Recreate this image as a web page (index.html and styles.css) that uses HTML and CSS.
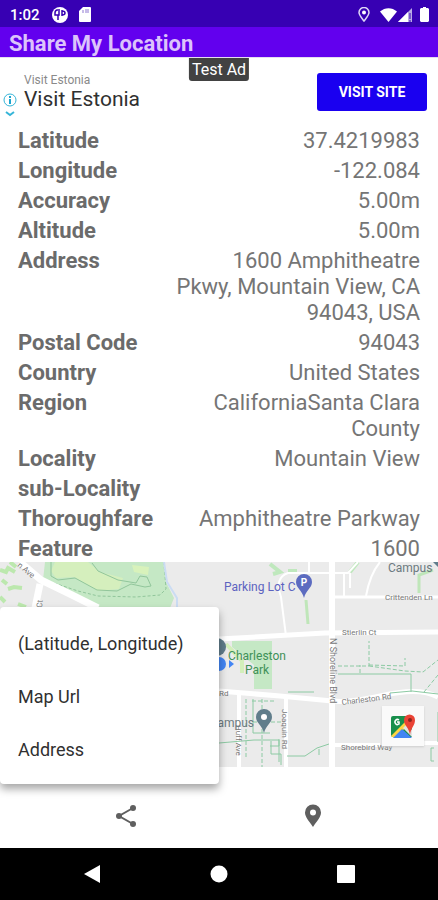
FILE: index.html
```
<!DOCTYPE html>
<html lang="en">
<head>
    <meta charset="UTF-8">
    <meta name="viewport" content="width=device-width, initial-scale=1.0">
    <title>Share My Location</title>
    <link rel="stylesheet" href="styles.css">
</head>
<body>
    <div class="status-bar">
        <span class="clock">1:02</span>
        <svg width="16" height="16" viewBox="0 0 16 16">
            <circle cx="8" cy="8" r="8" fill="#fff"/>
            <path d="M8 3H5a3 3 0 0 0-2 3v2h4V4M6 8v5M10 3v6M10 4c4 0 4 4 0 4" fill="none" stroke="#3700b3" stroke-width="1.500"/>
        </svg>
        <svg class="sd" width="12" height="15" viewBox="0 0 12 15">
            <path d="M4 0h7a1 1 0 0 1 1 1v13a1 1 0 0 1-1 1H1a1 1 0 0 1-1-1V4z" fill="#fff"/>
            <path d="M4 3v3M7 2v4M9 2v4" stroke="#8f78d2"/>
        </svg>
        <svg class="right" width="12" height="15" viewBox="0 0 12 15">
            <path d="M6 14C3 10 1 8 1 5.500a5 5 0 0 1 10 0C11 8 9 10 6 14z" fill="none" stroke="#ded6f5" stroke-width="1.500"/>
            <circle cx="6" cy="5.500" r="2" fill="#fff"/>
        </svg>
        <svg class="wifi" width="17" height="14" viewBox="0 0 17 14">
            <path d="M0 3.500C5-1 12-1 17 3.500L8.500 14z" fill="#fff"/>
        </svg>
        <svg class="signal" width="15" height="14" viewBox="0 0 15 14">
            <path d="M0 14L14 0v14z" fill="#b9aae5"/>
            <path d="M0 14L10 4v10z" fill="#fff"/>
            <path d="M12 5v6M12 12v2" stroke="#3700b3"/>
        </svg>
        <svg class="battery" width="9" height="15" viewBox="0 0 9 15">
            <path d="M3 0h3v1h2l1 1v12l-1 1H1l-1-1V2l1-1h2z" fill="#fff"/>
        </svg>
    </div>

    <header class="title-bar">
        <h1>Share My Location</h1>
    </header>

    <div class="ad">
        <span class="test-ad">Test Ad</span>
        <svg class="ad-info" width="14" height="24" viewBox="0 0 14 24">
            <circle cx="7" cy="7" r="6" fill="#fff" stroke="#35b5d8"/>
            <path d="M7 6v5M7 3v2" stroke="#1aa5cf" stroke-width="2"/>
            <path d="M3 19l4 3 4-3" fill="none" stroke="#35b5d8" stroke-width="2"/>
        </svg>
        <div class="ad-text">
            <span class="advertiser">Visit Estonia</span>
            <span class="headline">Visit Estonia</span>
        </div>
        <button type="button" class="visit">VISIT SITE</button>
    </div>

    <table class="details">
        <tr><th scope="row">Latitude</th><td>37.4219983</td></tr>
        <tr><th scope="row">Longitude</th><td>-122.084</td></tr>
        <tr><th scope="row">Accuracy</th><td>5.00m</td></tr>
        <tr><th scope="row">Altitude</th><td>5.00m</td></tr>
        <tr><th scope="row">Address</th><td>1600 Amphitheatre Pkwy, Mountain View, CA 94043, USA</td></tr>
        <tr><th scope="row">Postal Code</th><td>94043</td></tr>
        <tr><th scope="row">Country</th><td>United States</td></tr>
        <tr><th scope="row">Region</th><td>CaliforniaSanta Clara County</td></tr>
        <tr><th scope="row">Locality</th><td>Mountain View</td></tr>
        <tr><th scope="row">sub-Locality</th><td></td></tr>
        <tr><th scope="row">Thoroughfare</th><td>Amphitheatre Parkway</td></tr>
        <tr><th scope="row">Feature</th><td>1600</td></tr>
    </table>

    <div class="map">
        <svg class="map-canvas" viewBox="0 0 438 205" preserveAspectRatio="xMidYMin slice">
            <rect width="438" height="205" fill="#ebebeb"/>

            <!-- golf course -->
            <path d="M45 0H164L166 20 174 36 170 46H98L72 30 43 18z" fill="#c5e8c5"/>
            <path d="M55 0L51 9 56 16 74 15 98 29 119 27 123 16 100 10 88 0z" fill="#d5efbd"/>
            <path d="M132 3l17 2-1 8-14-3z" fill="#d8f2bb"/>
            <path d="M51 0v14l7 4 17-2 22 12 20 1 14-7 14 3 6-1-4-9-7-1-4 7-18-3-20-9-6-8" fill="none" stroke="#91c69b"/>
            <path d="M45 18l33 11 20 5 38 1 24-2 6-6-2-26" fill="none" stroke="#91c69b" stroke-dasharray="3 2"/>
            <path d="M164 0l3 20 10 16v10" fill="none" stroke="#cbdcf3" stroke-width="2"/>
            <path d="M0 8l6 2 2-4 7 4M2 18l5 4M8 27l6-2 8 1M0 35l5 5M10 0l6 5M18 42l8 3" fill="none" stroke="#bce8ae" stroke-width="4"/>

            <!-- parks -->
            <path d="M232 79h40v48h-18V103l-22-18z" fill="#c5e8c5"/>
            <path d="M226 82l16 17v12" fill="none" stroke="#d3efba" stroke-width="4"/>
            <path d="M270 2l10 8-7 2M288 9h9M358 0l-8 10" fill="none" stroke="#bfe8bd" stroke-width="4"/>
            <path d="M306 38l2 24M419 31V13l14-5" fill="none" stroke="#bfe6b9" stroke-width="3"/>

            <!-- roads -->
            <g fill="none" stroke="#fff">
                <path d="M20 0L41 18 72 33 98 46M40 22l-5 24" stroke-width="7"/>
                <path d="M219 77L325 71 438 70" stroke-width="5"/>
                <path d="M219 129L280 134 332 139Q350 141 385 133T438 135" stroke-width="5"/>
                <path d="M332 0V205" stroke-width="6"/>
                <path d="M332 35H438" stroke-width="3"/>
                <path d="M332 183H380M423 181H438M239 132V205M286 136V205" stroke-width="4"/>
                <path d="M286 74L281 35Q274 16 288 11H348L358 0M309 0V11M344 10V34M350 11V26M366 34Q370 12 380 0" stroke-width="2"/>
            </g>

            <!-- walking paths -->
            <g fill="none" stroke="#8ccaa3">
                <path d="M338 104h31V79M369 103l36 1V96M369 104l36 5 18 1 15-12M360 111v-8M424 130l14-17" stroke-dasharray="4 2"/>
                <path d="M338 112h73v18M390 131l22-2 26 3M219 181l35-3h25v22M287 194h18l12-8 12-4M319 187v6M288 130h26"/>
                <path d="M246 137v60M262 137v68M252 139h22M253 160h28" stroke-dasharray="4 2"/>
                <path d="M253 137v34h17M271 179v13h10v11M270 184h9v-7M434 186h-3v13h3M438 150v30"/>
            </g>

            <!-- street names -->
            <g class="street">
                <text x="385" y="38">Crittenden Ln</text>
                <text x="342" y="73">Stierlin Ct</text>
                <text x="342" y="143" transform="rotate(-7 342 143)">Charleston Rd</text>
                <text x="341" y="188">Shorebird Way</text>
                <text x="219" y="134">Rd</text>
                <text x="17" y="4" transform="rotate(40 17 4)">n Ave</text>
                <text x="42" y="46" transform="rotate(-85 42 46)">Ct</text>
                <text x="236" y="163" transform="rotate(90 236 163)">Huff Ave</text>
                <text x="282" y="147" transform="rotate(90 282 147)">Joaquin Rd</text>
                <text class="major" x="330" y="76" transform="rotate(90 330 76)">N Shoreline Blvd</text>
            </g>

            <!-- places -->
            <text class="place parking" x="224" y="29">Parking Lot C</text>
            <text class="place park" x="257" y="98" text-anchor="middle">Charleston</text>
            <text class="place park" x="257" y="112" text-anchor="middle">Park</text>
            <text class="place" x="388" y="10">Campus</text>
            <text class="place" x="254" y="165" text-anchor="end">Campus</text>
            <path d="M304 36C302 28 296 26 296 20a8 8 0 0 1 16 0C312 26 306 28 304 36z" fill="#5c6bc0"/>
            <text class="pin-letter" x="304" y="24" text-anchor="middle">P</text>
            <path d="M264 171C262 163 256 161 256 155a8 8 0 0 1 16 0C272 161 266 163 264 171z" fill="#607d8b"/>
            <circle cx="264" cy="155" r="3" fill="#fff"/>
            <circle cx="217" cy="85" r="9" fill="#607d8b"/>
            <circle cx="219" cy="102" r="7" fill="#4285f4"/>
            <path d="M229 98l5 4-5 4z" fill="#4285f4"/>
            <path d="M433 0h5v5z" fill="#607d8b"/>
        </svg>
        <button type="button" class="maps-button" aria-label="Open in Google Maps">
            <svg width="26" height="26" viewBox="0 0 26 26">
                <path d="M3 3h19v21H3a2 2 0 0 1-2-2V5a2 2 0 0 1 2-2z" fill="#188f4c"/>
                <path d="M1 23L17 7l3 4L4 25z" fill="#ffd443"/>
                <path d="M3 25l9-9 10 9z" fill="#4285f4"/>
                <path d="M13 15l4-4 5 6v7z" fill="#e3e3e3"/>
                <path d="M20 22C19 14 14 13 14 7a5 5 0 0 1 11 0C25 13 21 14 20 22z" fill="#ea4335"/>
                <circle cx="20" cy="7" r="2" fill="#8c251d"/>
                <path d="M9 7a2.500 2.500 0 1 0 0 4V9H7" fill="none" stroke="#fff" stroke-width="1.500"/>
            </svg>
        </button>
    </div>

    <div class="bottom">
        <div class="share-menu">
            <button type="button">(Latitude, Longitude)</button>
            <button type="button">Map Url</button>
            <button type="button">Address</button>
        </div>
        <nav class="tabs">
            <button type="button" aria-label="Share">
                <svg width="22" height="24" viewBox="0 0 22 24">
                    <path d="M18 4L4 12l14 8" fill="none" stroke="#5f5f5f" stroke-width="2"/>
                    <circle cx="18" cy="4" r="3" fill="#5f5f5f"/>
                    <circle cx="4" cy="12" r="3" fill="#5f5f5f"/>
                    <circle cx="18" cy="20" r="3" fill="#5f5f5f"/>
                </svg>
            </button>
            <button type="button" aria-label="Location">
                <svg width="16" height="24" viewBox="0 0 16 24">
                    <path fill-rule="evenodd" d="M8 23C4 17 0 13 0 8.500a8 8 0 0 1 16 0C16 13 12 17 8 23zM8 5.500a3 3 0 1 0 0 6 3 3 0 0 0 0-6z" fill="#5f5f5f"/>
                </svg>
            </button>
        </nav>
    </div>

    <div class="system-nav">
        <button type="button" aria-label="Back">
            <svg width="18" height="20" viewBox="0 0 18 20"><path d="M17 1v18L1 10z" fill="#fff"/></svg>
        </button>
        <button type="button" aria-label="Home">
            <svg width="18" height="18" viewBox="0 0 18 18"><circle cx="9" cy="9" r="8.500" fill="#fff"/></svg>
        </button>
        <button type="button" aria-label="Recent apps">
            <svg width="18" height="18" viewBox="0 0 18 18"><rect width="18" height="18" rx="1" fill="#fff"/></svg>
        </button>
    </div>
</body>
</html>
```
FILE: styles.css
```
* {
    box-sizing: border-box;
}

body {
    margin: 0;
    min-height: 100vh;
    display: flex;
    flex-direction: column;
    background-color: #ffffff;
    color: #757575;
    font-family: Roboto, Arial, sans-serif;
}

svg {
    display: block;
    flex-shrink: 0;
}

button {
    border: none;
    background: none;
    padding: 0;
    font-family: inherit;
    cursor: pointer;
}

.status-bar {
    display: flex;
    align-items: center;
    height: 27px;
    padding: 2px 9px 0 10px;
    background-color: #3700b3;
    color: #ffffff;
}

.clock {
    margin-right: 12px;
    font-size: 15px;
    font-weight: 500;
}

.sd {
    margin-left: 11px;
}

.right {
    margin-left: auto;
}

.wifi {
    margin-left: 10px;
}

.signal {
    margin-left: 1px;
}

.battery {
    margin-left: 7px;
}

.title-bar {
    padding: 4px 9px 0;
    background-color: #6200ee;
}

.title-bar h1 {
    margin: 0;
    font-size: 22px;
    line-height: 26px;
    font-weight: 700;
    color: #dcc3fb;
}

.ad {
    position: relative;
    display: flex;
    align-items: center;
    height: 69px;
    padding: 0 11px 0 3px;
    border-top: 1px solid #e4dcf0;
}

.test-ad {
    position: absolute;
    top: 0;
    left: 50%;
    transform: translateX(-50%);
    padding: 1px 3px;
    border-radius: 0 0 3px 3px;
    background-color: #424242;
    color: #ffffff;
    font-size: 16px;
    line-height: 21px;
}

.ad-info {
    margin-top: 26px;
}

.ad-text {
    display: flex;
    flex-direction: column;
    margin-left: 7px;
}

.advertiser {
    font-size: 12px;
    line-height: 14px;
    color: #8a8a8a;
}

.headline {
    font-size: 21px;
    line-height: 24px;
    color: #303030;
}

.visit {
    margin-left: auto;
    width: 110px;
    height: 38px;
    border-radius: 3px;
    background-color: #1a00f0;
    color: #ffffff;
    font-size: 14px;
    font-weight: 700;
}

.details {
    width: 100%;
    margin-bottom: -2px;
    padding: 0 18px;
    border-spacing: 0;
    font-size: 22px;
    line-height: 26px;
}

.details th,
.details td {
    padding: 2px 0;
    vertical-align: top;
}

.details th {
    text-align: left;
    font-weight: 700;
    color: #6b6b6b;
}

.details td {
    width: 61%;
    height: 30px;
    text-align: right;
}

.map {
    position: relative;
    flex: 1 0 204px;
    margin-bottom: 17px;
    overflow: hidden;
}

.map-canvas {
    position: absolute;
    width: 100%;
    height: 100%;
}

.street {
    font-size: 8px;
    fill: #777777;
}

.major {
    font-size: 9px;
}

.place {
    font-size: 12px;
    fill: #6c7a80;
}

.parking {
    fill: #5c63c0;
}

.park {
    fill: #3f9158;
}

.pin-letter {
    font-size: 10px;
    font-weight: 700;
    fill: #ffffff;
}

.maps-button {
    position: absolute;
    right: 14px;
    bottom: 21px;
    display: flex;
    align-items: center;
    justify-content: center;
    width: 42px;
    height: 40px;
    background-color: #fafafa;
    box-shadow: 0 1px 2px #cccccc;
}

.bottom {
    position: relative;
}

.share-menu {
    position: absolute;
    left: 0;
    bottom: 100%;
    display: flex;
    flex-direction: column;
    width: 50%;
    padding: 10px 0 8px;
    border-radius: 4px;
    background-color: #ffffff;
    box-shadow: 0 5px 9px rgba(0, 0, 0, 0.35);
}

.share-menu button {
    padding: 0 18px;
    font-size: 18px;
    line-height: 53px;
    text-align: left;
    color: #303030;
}

.tabs {
    display: flex;
    height: 64px;
    padding: 0 32px;
}

.tabs button {
    flex: 1;
    display: flex;
    align-items: center;
    justify-content: center;
}

.system-nav {
    display: flex;
    align-items: center;
    height: 52px;
    padding: 0 29px;
    background-color: #000000;
}

.system-nav button {
    flex: 1;
    display: flex;
    justify-content: center;
}
```
